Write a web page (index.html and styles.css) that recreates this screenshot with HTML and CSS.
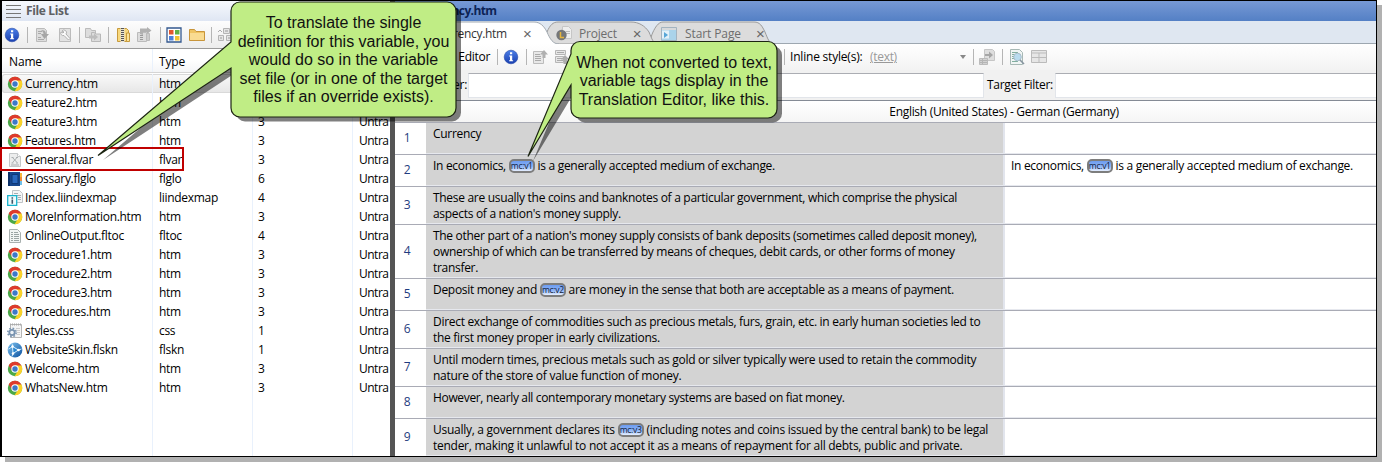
FILE: index.html
```html
<!DOCTYPE html>
<html lang="en">
<head>
<meta charset="utf-8">
<title>Translation Editor</title>
<link rel="stylesheet" href="styles.css">
</head>
<body>
<svg class="defs" width="0" height="0">
  <defs>
    <linearGradient id="blue" x1="0" y1="0" x2="1" y2="1"><stop offset="0" stop-color="#7fc4f0"/><stop offset="1" stop-color="#0a4f9e"/></linearGradient>
    <linearGradient id="info" x1="0" y1="0" x2="0" y2="1"><stop offset="0" stop-color="#4b7fe8"/><stop offset="1" stop-color="#1a3fb0"/></linearGradient>
  </defs>
  <symbol id="chrome" viewBox="0 0 16 16">
    <circle cx="8" cy="8" r="7.2" fill="#4ba847"/>
    <path d="M8 8 4.9 9.8 1.7 4.4A7.2 7.2 0 0 1 14.5 4.9L8 4.9Z" fill="#de3a2c"/>
    <path d="M8 4.6h6.4A7.2 7.2 0 0 1 7.5 15.2L11 9.8Z" fill="#fbd22a"/>
    <circle cx="8" cy="8" r="3.7" fill="#fff"/>
    <circle cx="8" cy="8" r="2.7" fill="#3c78c8"/>
  </symbol>
  <symbol id="info-dot" viewBox="0 0 16 16">
    <circle cx="8" cy="8" r="6.8" fill="url(#info)" stroke="#2447a6" stroke-width=".6"/>
    <path d="M7 3.3h2.2v2H7zM6.2 6.6h3v4.6h.9v1.1H6.1v-1.1H7V7.6h-.8z" fill="#fff"/>
  </symbol>
  <symbol id="var" viewBox="0 0 16 16">
    <path d="M2.500 1.500h8l3 3v10h-11z" fill="#eceded" stroke="#c4c7c8"/>
    <path d="M10.500 1.500v3h3" fill="#fff" stroke="#c4c7c8"/>
    <path d="M5.500 5.500l4.500 5M10 5.500 5.500 10.500M4.500 5.500h2M9 5.500h2M4.500 11h2M9 11h2M4 13h8" stroke="#a9adaf" fill="none"/>
  </symbol>
  <symbol id="book" viewBox="0 0 16 16">
    <path d="M12 2h3v4h-3z" fill="#f6b73c"/><path d="M12 6h3v4h-3z" fill="#f08a3a"/><path d="M12 10h3v4h-3z" fill="#6ec0ea"/>
    <path d="M1 1h12v14H1z" fill="#17488f"/><path d="M1 1h2v14H1z" fill="#0b2f66"/>
    <path d="M5 3.500h6v9H5z" fill="#2a68bd" stroke="#0f3877"/>
  </symbol>
  <symbol id="index" viewBox="0 0 16 16">
    <path d="M5.500 .5h7l3 3v9h-10z" fill="#f4f5f6" stroke="#bfc3c6"/>
    <path d="M7 3.500h4M7 5.500h7M11 7.500h3M11 9.500h3" stroke="#a9aeb2"/>
    <path d="M.7 5.700h9v9.600h-9z" fill="#eefbfd" stroke="#19b2cc" stroke-width="1.300"/>
    <path d="M4.500 7.300h1.600v1.400H4.500zM4.500 9.500h1.600v4.300H4.500z" fill="#456"/>
  </symbol>
  <symbol id="toc" viewBox="0 0 16 16">
    <path d="M2.500 1.500h8l3 3v10h-11z" fill="#f1f5f4" stroke="#a8b0af"/>
    <path d="M4 4.500h2M7 4.500h4M4 6.500h2M7 6.500h5M4 8.500h2M7 8.500h5M4 10.500h2M7 10.500h5M4 12.500h2M7 12.500h5" stroke="#9aa5a4"/>
  </symbol>
  <symbol id="css" viewBox="0 0 16 16">
    <path d="M3.500 1.500h11v13h-11z" fill="#f5f5f5" stroke="#b6b6b6"/>
    <path d="M3 1.500h12" stroke="#aaa" stroke-width="2" stroke-dasharray="1 1"/>
    <path d="M9 5.500h4M10 7.500h3M10 9.500h3M10 11.500h3" stroke="#ccc"/>
    <circle cx="5" cy="9.500" r="4.200" fill="none" stroke="#7d97b1" stroke-width="1.600" stroke-dasharray="1.700 1.600"/>
    <circle cx="5" cy="9.500" r="2.700" fill="#eef3f7" stroke="#7792af" stroke-width="1.800"/>
  </symbol>
  <symbol id="skin" viewBox="0 0 16 16">
    <circle cx="8" cy="8" r="7.400" fill="url(#blue)"/>
    <path d="M5.500 4.500 11.500 8 6 11.500zM5 1.500l.5 3L1.500 7M11.500 8l3-1M6 11.500l-1 3" fill="#2a86d0" stroke="#d6f0ff" stroke-width="1"/>
    <circle cx="5.500" cy="4.500" r="1.300" fill="#fff"/><circle cx="11.500" cy="8" r="1.300" fill="#fff"/><circle cx="6" cy="11.500" r="1.300" fill="#fff"/>
  </symbol>
  <symbol id="page-arrow" viewBox="0 0 16 16">
    <path d="M1.500 1.500h8l2 2v11h-10z" fill="#ddd" stroke="#bbb"/>
    <path d="M3 4.500h4M3 6.500h3M3 10.500h3M3 12.500h6" stroke="#aaa"/>
    <path d="M6 3.500c3-1 5 .5 5 3.500h3l-4.500 5L6 7h2.500c0-2-1-3-2.500-3.500z" fill="#a6a6a6"/>
  </symbol>
  <symbol id="page-tool" viewBox="0 0 16 16">
    <path d="M2.500 1.500h11v13h-11z" fill="#e2e2e2" stroke="#bbb"/>
    <path d="M5 4a2.500 2.500 0 0 1 4 3l4 4.500-1.500 1.500L7 8.500A2.500 2.500 0 0 1 4 5l2 1 1-1z" fill="#fafafa" stroke="#b0b0b0"/>
  </symbol>
  <symbol id="folder-out" viewBox="0 0 16 16">
    <path d="M.5 1.500h5l1 2h4v7h-10z" fill="#ddd" stroke="#bbb"/>
    <path d="M6.500 5.500h3l1 1.500h5v7.500h-9z" fill="#dcdcdc" stroke="#b8b8b8"/>
    <path d="M4 8.500h5V6.500l4 3.500-4 3.500v-2H4z" fill="#bdbdbd"/>
  </symbol>
  <symbol id="zip" viewBox="0 0 16 16">
    <path d="M2.500 1.500h9l2 2v11h-11z" fill="#f8d87c" stroke="#c79a3c"/>
    <path d="M11.500 6h3v8.500h-3z" fill="#fbe39a" stroke="#c79a3c"/>
    <path d="M5.500 1h4v14h-4z" fill="#e9e4d5"/><path d="M7.500 1v14" stroke="#555" stroke-width="3" stroke-dasharray="1 1"/>
  </symbol>
  <symbol id="zip-gray" viewBox="0 0 16 16">
    <path d="M1.500 5.500h9v9h-9z" fill="#ddd" stroke="#bbb"/><path d="M5.500 6v8" stroke="#999" stroke-width="3" stroke-dasharray="1 1"/>
    <path d="M4 7V1.500h7V0l4.500 3.500L11 7V5H7v3z" fill="#b1b1b1"/><path d="M10.500 6.500h3v7h-3z" fill="#ccc" stroke="#bbb"/>
  </symbol>
  <symbol id="tiles" viewBox="0 0 16 16">
    <path d="M1 1h14v14H1z" fill="#fff" stroke="#33588f" stroke-width="1.300"/>
    <path d="M3 3h4.500v4.500H3z" fill="#e2562d"/><path d="M9 3h4.500v4.500H9z" fill="#5fb046"/><path d="M3 9h4.500v4.500H3z" fill="#4d80da"/><path d="M9 9h4.500v4.500H9z" fill="#f2c233"/>
  </symbol>
  <symbol id="folder" viewBox="0 0 16 16">
    <path d="M.5 13.500v-11h5l1.500 2h8.500v9z" fill="#efc462" stroke="#c8953b"/><path d="M1 13V6h14v7z" fill="#f9db91"/>
  </symbol>
  <symbol id="nodes" viewBox="0 0 16 16">
    <path d="M6.500 1.500h6v5h-6zM1.500 8.500h5v5h-5zM9.500 8.500h5v5h-5z" fill="#e5e5e5" stroke="#b4b4b4"/><path d="M8 4h3M3 11h2M11 11h2" stroke="#999"/><path d="M1 5l2-2 2 2" fill="none" stroke="#aaa"/>
  </symbol>
  <symbol id="doc-up" viewBox="0 0 16 16">
    <path d="M1.500 2.500h10v12h-10z" fill="#e8e8e8" stroke="#bcbcbc"/><path d="M3 5.500h5M3 7.500h6M3 9.500h6M3 11.500h6" stroke="#aaa"/>
    <path d="M12 1l4 4.500h-2.500V9h-3V5.500H8z" fill="#b0b0b0"/>
  </symbol>
  <symbol id="table-up" viewBox="0 0 16 16">
    <path d="M1.500 1.500h10v4h-10zM1.500 7.500h8v6h-8z" fill="#e6e6e6" stroke="#b6b6b6"/><path d="M3 3.500h7M3 9.500h6M3 11.500h6" stroke="#aaa"/>
    <path d="M11 6l4.500 4.500H13V15H9.500v-4.500H7z" fill="#adadad"/>
  </symbol>
  <symbol id="doc-in" viewBox="0 0 16 16">
    <path d="M5.500 .5h8l2 2v9h-10z" fill="#dedede" stroke="#c6c6c6"/><path d="M.5 9.500h8v6h-8z" fill="#d2d2d2" stroke="#bbb"/>
    <path d="M1 11.500h7M1 13.500h7M3.500 10v5" stroke="#b5b5b5"/><path d="M6 5h4V2.500L14 6l-4 3.500V7H6z" fill="#a6a6a6"/>
  </symbol>
  <symbol id="preview" viewBox="0 0 16 16">
    <path d="M1.500 .5h9l3 3v12h-12z" fill="#f0f5f4" stroke="#a7b8b5"/><path d="M3 3.500h6M3 5.500h3M3 7.500h2M3 9.500h2M3 12.500h6" stroke="#82ae9f"/>
    <circle cx="8.500" cy="8" r="3.800" fill="#b9dcef" stroke="#a9bdc9"/><path d="M11 11l4 4" stroke="#8895a0" stroke-width="1.600"/>
  </symbol>
  <symbol id="grid" viewBox="0 0 16 16">
    <path d="M.5 1.500h15v12H.5z" fill="#e6e6e6" stroke="#bbb"/><path d="M1 4h14M1 8.500h14M8 4v9" stroke="#bbb"/>
  </symbol>
  <symbol id="project" viewBox="0 0 18 16">
    <path d="M6.500 .5h6l3 3v9h-9z" fill="#eee" stroke="#c6c6c6"/><path d="M10 5.500h4M10 7.500h4" stroke="#bbb"/>
    <circle cx="5.500" cy="9" r="5.200" fill="#75777a"/><path d="M4.500 6v5.500h3.500" fill="none" stroke="#e6b63f" stroke-width="1.500"/>
  </symbol>
  <symbol id="start" viewBox="0 0 16 14">
    <path d="M.5 .5h15v13H.5z" fill="#aad3ea" stroke="#a3b3bf"/><path d="M1 1h14v2H1z" fill="#d7d9db"/><path d="M1 3.500h7v8H1z" fill="#e4f1f8"/><path d="M3 5l4 3-4 3z" fill="#57a6d7"/>
  </symbol>
</svg>

<div class="window">
  <section class="files">
    <div class="files-title"><span class="grip"><i></i><i></i><i></i><i></i></span><b>File List</b></div>
    <div class="files-tools">
      <svg><use href="#info-dot"/></svg><i class="sep s1"></i>
      <svg><use href="#page-arrow"/></svg><svg class="g1"><use href="#page-tool"/></svg><i class="sep s2"></i>
      <svg class="g2"><use href="#folder-out"/></svg><i class="sep s3"></i>
      <svg class="g3"><use href="#zip"/></svg><svg class="g4"><use href="#zip-gray"/></svg><i class="sep s4"></i>
      <svg class="g5"><use href="#tiles"/></svg><svg class="g6"><use href="#folder"/></svg><i class="sep s5"></i>
      <svg class="g7"><use href="#nodes"/></svg>
    </div>
    <div class="frow fhead"><span>Name</span><span>Type</span><span></span><span></span></div>
    <div class="flist">
      <div class="frow on"><span><svg><use href="#chrome"/></svg>Currency.htm</span><span>htm</span><span></span><span></span></div>
      <div class="frow"><span><svg><use href="#chrome"/></svg>Feature2.htm</span><span>htm</span><span></span><span></span></div>
      <div class="frow"><span><svg><use href="#chrome"/></svg>Feature3.htm</span><span>htm</span><span>3</span><span>Untra</span></div>
      <div class="frow"><span><svg><use href="#chrome"/></svg>Features.htm</span><span>htm</span><span>3</span><span>Untra</span></div>
      <div class="frow"><span><svg><use href="#var"/></svg>General.flvar</span><span>flvar</span><span>3</span><span>Untra</span></div>
      <div class="frow"><span><svg><use href="#book"/></svg>Glossary.flglo</span><span>flglo</span><span>6</span><span>Untra</span></div>
      <div class="frow"><span><svg><use href="#index"/></svg>Index.liindexmap</span><span>liindexmap</span><span>4</span><span>Untra</span></div>
      <div class="frow"><span><svg><use href="#chrome"/></svg>MoreInformation.htm</span><span>htm</span><span>3</span><span>Untra</span></div>
      <div class="frow"><span><svg><use href="#toc"/></svg>OnlineOutput.fltoc</span><span>fltoc</span><span>4</span><span>Untra</span></div>
      <div class="frow"><span><svg><use href="#chrome"/></svg>Procedure1.htm</span><span>htm</span><span>3</span><span>Untra</span></div>
      <div class="frow"><span><svg><use href="#chrome"/></svg>Procedure2.htm</span><span>htm</span><span>3</span><span>Untra</span></div>
      <div class="frow"><span><svg><use href="#chrome"/></svg>Procedure3.htm</span><span>htm</span><span>3</span><span>Untra</span></div>
      <div class="frow"><span><svg><use href="#chrome"/></svg>Procedures.htm</span><span>htm</span><span>3</span><span>Untra</span></div>
      <div class="frow"><span><svg><use href="#css"/></svg>styles.css</span><span>css</span><span>1</span><span>Untra</span></div>
      <div class="frow"><span><svg><use href="#skin"/></svg>WebsiteSkin.flskn</span><span>flskn</span><span>1</span><span>Untra</span></div>
      <div class="frow"><span><svg><use href="#chrome"/></svg>Welcome.htm</span><span>htm</span><span>3</span><span>Untra</span></div>
      <div class="frow"><span><svg><use href="#chrome"/></svg>WhatsNew.htm</span><span>htm</span><span>3</span><span>Untra</span></div>
      <div class="frow rest"><span></span><span></span><span></span><span></span></div>
    </div>
  </section>
  <div class="splitter"></div>
  <section class="editor">
    <div class="ed-title">Currency.htm</div>
    <div class="tabs">
      <svg class="tab-shapes" width="440" height="23" viewBox="0 0 440 23">
        <path d="M249 23l5-2c2-3 2-6 4-10s5-10 10-10h91c6 0 8 4 11 10 3 7 4 12 10 12z" fill="#dcdcdc" stroke="#9a9a9a"/>
        <path d="M140 23c6 0 9-5 12-12s6-10 11-10h73c8 0 14 4 18 10 3 7 4 12 10 12z" fill="#dcdcdc" stroke="#9a9a9a"/>
        <path d="M0 24V1h139c6 0 10 4 13 10 3 7 6 12 12 12v1z" fill="#fff" stroke="#a2aab2"/>
      </svg>
      <div class="tab t1"><span>Currency.htm</span><b>×</b></div>
      <div class="tab t2"><svg width="18" height="16"><use href="#project"/></svg><span>Project</span><b>×</b></div>
      <div class="tab t3"><svg width="16" height="14"><use href="#start"/></svg><span>Start Page</span><b>×</b></div>
    </div>
    <div class="ed-tools">
      <span class="name">Editor</span><i class="sep"></i>
      <svg class="a1"><use href="#info-dot"/></svg><i class="sep a2"></i>
      <svg class="a3"><use href="#doc-up"/></svg><svg class="a4"><use href="#table-up"/></svg>
      <i class="sep a5"></i><span class="inl">Inline style(s):</span><span class="txt">(text)</span><i class="drop"></i><i class="sep a6"></i>
      <svg class="a7"><use href="#doc-in"/></svg><i class="sep a8"></i>
      <svg class="a9"><use href="#preview"/></svg><svg class="a10"><use href="#grid"/></svg>
    </div>
    <div class="filters"><label class="src">Filter:</label><span class="box b1"></span><label class="tgt">Target Filter:</label><span class="box b2"></span></div>
    <div class="lang">English (United States) - German (Germany)</div>
    <div class="segs">
      <div class="seg h32"><span>1</span><p>Currency</p><p></p></div>
      <div class="seg h32"><span>2</span><p>In economics, <em>mc:v1</em> is a generally accepted medium of exchange.</p><p>In economics, <em>mc:v1</em> is a generally accepted medium of exchange.</p></div>
      <div class="seg h38"><span>3</span><p>These are usually the coins and banknotes of a particular government, which comprise the physical<br>aspects of a nation's money supply.</p><p></p></div>
      <div class="seg h54"><span>4</span><p>The other part of a nation's money supply consists of bank deposits (sometimes called deposit money),<br>ownership of which can be transferred by means of cheques, debit cards, or other forms of money<br>transfer.</p><p></p></div>
      <div class="seg h32"><span>5</span><p>Deposit money and <em>mc:v2</em> are money in the sense that both are acceptable as a means of payment.</p><p></p></div>
      <div class="seg h38"><span>6</span><p>Direct exchange of commodities such as precious metals, furs, grain, etc. in early human societies led to<br>the first money proper in early civilizations.</p><p></p></div>
      <div class="seg h38"><span>7</span><p class="wide">Until modern times, precious metals such as gold or silver typically were used to retain the commodity<br>nature of the store of value function of money.</p><p></p></div>
      <div class="seg h32"><span>8</span><p class="tight">However, nearly all contemporary monetary systems are based on fiat money.</p><p></p></div>
      <div class="seg h38"><span>9</span><p class="wide">Usually, a government declares its <em>mc:v3</em> (including notes and coins issued by the central bank) to be legal<br>tender, making it unlawful to not accept it as a means of repayment for all debts, public and private.</p><p></p></div>
    </div>
  </section>
</div>

<div class="mark"></div>
<svg class="bubbles" width="1382" height="462" viewBox="0 0 1382 462">
  <defs>
    <path id="b1" d="M240 2H447a9 9 0 0 1 9 9V108a9 9 0 0 1-9 9H240a9 9 0 0 1-9-9V68L98 155.500 231 42V11a9 9 0 0 1 9-9z"/>
    <path id="b2" d="M580 41.500H768a9 9 0 0 1 9 9V109a9 9 0 0 1-9 9H580a9 9 0 0 1-9-9V85L528 156.500 571 54V50.500a9 9 0 0 1 9-9z"/>
  </defs>
  <use href="#b1" x="5" y="4.500" fill="#000" fill-opacity=".5"/><use href="#b1" fill="#c0ed85" stroke="#1c2412" stroke-width="1.200"/>
  <use href="#b2" x="5" y="4.500" fill="#000" fill-opacity=".5"/><use href="#b2" fill="#c0ed85" stroke="#1c2412" stroke-width="1.200"/>
</svg>
<div class="note n1">To translate the single<br>definition for this variable, you<br>would do so in the variable<br>set file (or in one of the target<br>files if an override exists).</div>
<div class="note n2">When not converted to text,<br>variable tags display in the<br>Translation Editor, like this.</div>
</body>
</html>
```
FILE: styles.css
```css
* { box-sizing: border-box; }
body {
  margin: 0; width: 1382px; height: 462px; overflow: hidden; position: relative;
  background: linear-gradient(#b1b1b1, #b1b1b1) 5px 5px no-repeat #fff;
  font: 12px/16px "Open Sans", "Noto Sans", sans-serif; letter-spacing: -.3px; color: #000;
  white-space: nowrap;
}
.defs { position: absolute; }
p { margin: 0; }
svg { flex: none; }
.window { display: flex; width: 1377px; height: 457px; border: 1px solid #000; border-left-width: 2px; background: #fff; overflow: hidden; }

.files { width: 388px; flex: none; overflow: hidden; }
.files-title { height: 20px; display: flex; align-items: center; padding-left: 4px; background: linear-gradient(#f7f9fd, #dfe6f3); color: #5e6064; letter-spacing: -.35px; }
.grip { width: 15px; display: flex; flex-direction: column; gap: 3px; margin-right: 5px; }
.grip i { height: 1px; background: #777; }
.files-tools { height: 28px; display: flex; align-items: center; padding-left: 2px; background: linear-gradient(#fdfdfd, #ececec); border-bottom: 1px solid #9a9a9a; }
.files-tools svg, .ed-tools svg { width: 16px; height: 16px; }
.sep { width: 1px; height: 16px; background: #b5b5b5; flex: none; }
.s1 { margin: 0 7px; }
.g1 { margin-left: 6px; }
.s2 { margin: 0 5px 0 6px; }
.s3 { margin: 0 6px 0 7px; }
.g4 { margin-left: 5px; }
.s4 { margin: 0 5px 0 8px; }
.g6 { margin-left: 7px; }
.s5 { margin: 0 5px 0 6px; }
.frow { height: 19px; display: grid; grid-template-columns: 151px 100px 100px 1fr; }
.frow span { padding-left: 6px; border-right: 1px solid #e9f1fc; display: flex; align-items: center; overflow: hidden; }
.frow span:nth-child(3) { padding-left: 5px; }
.frow span:last-child { border-right: 0; letter-spacing: -.5px; }
.frow span:first-child { padding-left: 5px; }
.frow svg { width: 16px; height: 16px; margin-right: 2px; }
.fhead { height: 24px; background: linear-gradient(#fff 45%, #f4f5f7); border-bottom: 1px solid #d5d5d5; }
.frow.fhead span { padding-top: 2px; letter-spacing: -.15px; }
.frow.fhead span:first-child { padding-left: 7px; }
.flist { padding-top: 1px; }
.on { background: linear-gradient(#fafafa, #e6e6e6); border-radius: 3px; box-shadow: inset 0 0 0 1px #d9d9d9; }
.rest { height: 70px; }
.splitter { width: 5px; background: #555; flex: none; }

.editor { flex: 1; min-width: 0; }
.ed-title { height: 20px; padding: 2px 0 0 26px; background: linear-gradient(#7799d5, #5480c5); color: #0c2355; font-weight: 700; letter-spacing: -.6px; }
.tabs { height: 23px; position: relative; display: flex; align-items: center; background: #dfe7f1; border-bottom: 1px solid #9da7b0; }
.tab-shapes { position: absolute; left: 0; top: 0; }
.tab { position: relative; display: flex; align-items: center; color: #6d6d6d; padding-top: 3px; }
.tab b { font: 15px/16px "Liberation Sans", sans-serif; color: #666; }
.t1 { padding-left: 39px; width: 161px; color: #333; }
.t1 b { margin-left: 16px; }
.t2 svg { margin-right: 5px; }
.t2 { width: 105px; letter-spacing: -.2px; }
.t3 { letter-spacing: -.1px; }
.t2 b { margin-left: 16px; }
.t3 b { margin-left: 15px; }
.t3 svg { margin-right: 8px; }
.ed-tools { height: 26px; display: flex; align-items: center; background: linear-gradient(#fff, #f3f3f3); }
.name { width: 95px; text-align: right; margin-right: 7px; }
.a1 { margin-left: 5px; }
.a2 { margin: 0 5px 0 7px; }
.a4 { margin-left: 6px; }
.a5 { margin: 0 5px 0 214px; }
.inl { width: 73px; letter-spacing: -.2px; }
.txt { color: #999; text-decoration: underline; margin-left: 7px; width: 28px; }
.drop { border: 3px solid transparent; border-top: 4px solid #888; border-bottom: 0; margin-left: 62px; }
.a6 { margin: 0 5px 0 7px; }
.a8 { margin: 0 6px 0 7px; }
.a10 { margin-left: 6px; }
.filters { height: 31px; display: flex; align-items: center; background: #f1f1f1; border-bottom: 1px solid #858b95; }
.src { width: 72px; text-align: right; }
.box { height: 25px; background: #fff; border: 1px solid #e2e5ea; border-top-color: #abadb3; }
.b1 { width: 516px; margin-left: 1px; }
.tgt { width: 68px; margin-left: 3px; }
.b2 { flex: 1; border-right: 0; }
.lang { height: 21px; padding: 3px 0 0 237px; text-align: center; background: linear-gradient(#fff, #f5f5f5); }
.seg { display: grid; grid-template-columns: 31px 577px 1fr; border-top: 1px solid #a9abb5; }
.seg span { font-size: 12px; color: #1f3c80; display: flex; align-items: center; justify-content: center; padding: 0 7px 2px 0; }
.seg p { padding: 3px 0 0 7px; border-bottom: 1px solid #e6e8ee; }
.seg p:nth-child(2) { background: #d3d3d3; }
.seg p:nth-child(3) { border-left: 2px solid #e2e5ed; padding-left: 6px; }
.wide { letter-spacing: -.27px; }
.tight { letter-spacing: -.34px; }
.h32 { height: 32px; } .h38 { height: 38px; } .h54 { height: 54px; }
em {
  display: inline-block; width: 26px; height: 14px; border: 2px solid #7d7d7d; border-radius: 5px; vertical-align: top; margin-top: 1px;
  background: linear-gradient(#6c9cf0, #8fb5f7 55%, #e6efff); font: 8.5px/10px "Open Sans", sans-serif; letter-spacing: -.3px; text-align: center; color: #101c3c;
}

.mark { position: absolute; left: 0; top: 147px; width: 184px; height: 24px; border: 2px solid #c00000; }
.bubbles { position: absolute; left: 0; top: 0; }
.note { position: absolute; font: 16px/18.6px "Liberation Sans", Arial, sans-serif; letter-spacing: 0; text-align: center; color: #111; }
.n1 { left: 231px; top: 14px; width: 225px; }
.n2 { left: 571px; top: 53.500px; width: 206px; }
```
